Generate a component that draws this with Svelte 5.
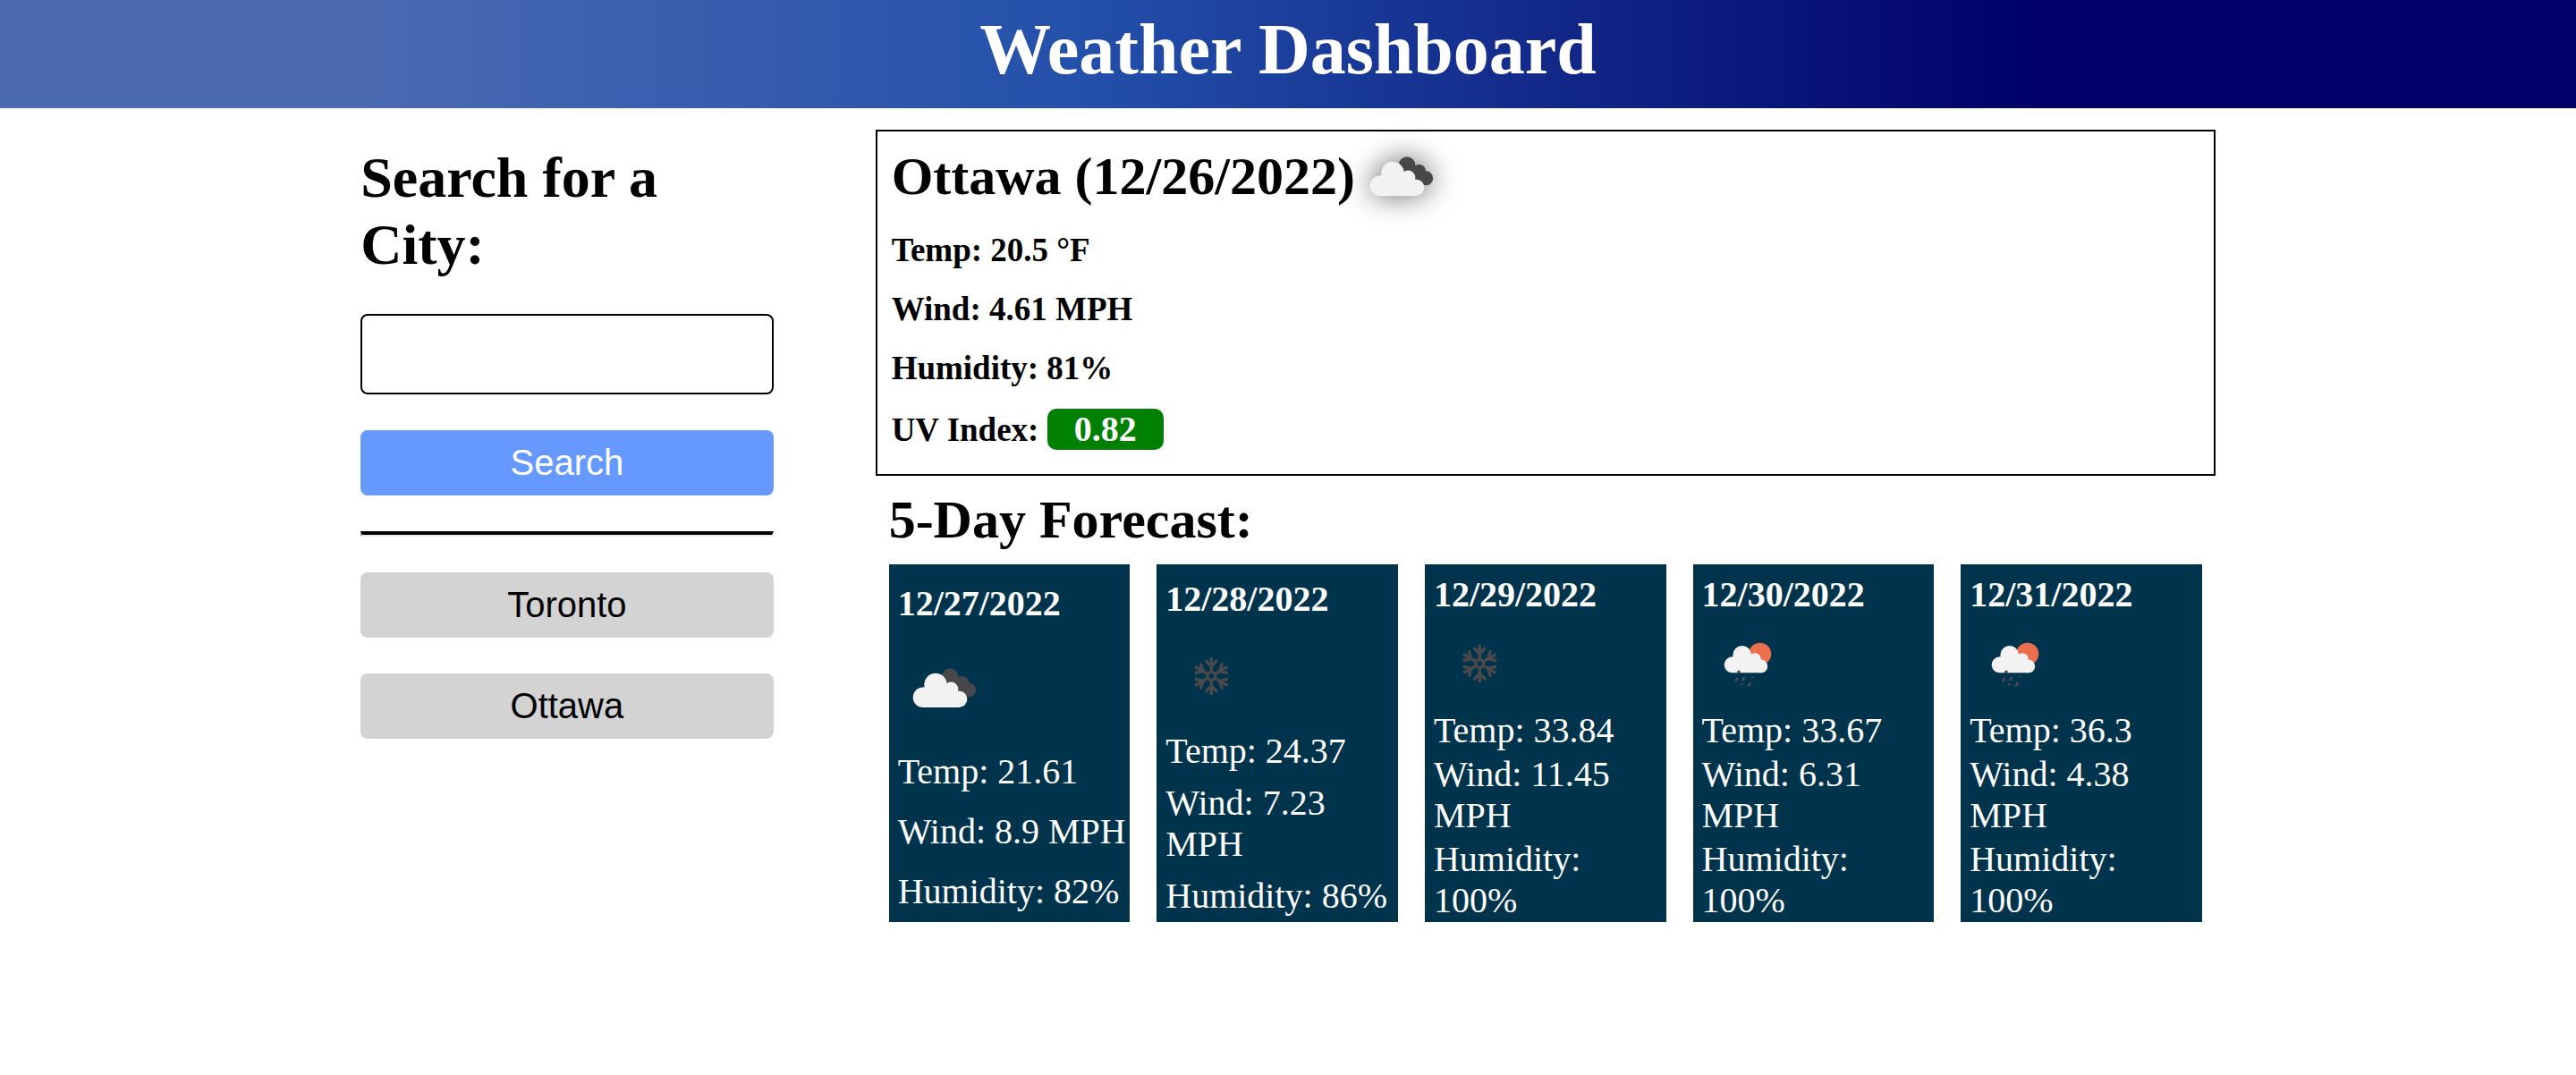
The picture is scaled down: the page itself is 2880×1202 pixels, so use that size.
<script>
  const history = ['Toronto', 'Ottawa'];

  const current = {
    city: 'Ottawa',
    date: '12/26/2022',
    temp: '20.5',
    wind: '4.61',
    humidity: '81',
    uv: '0.82',
  };

  const forecast = [
    { date: '12/27/2022', icon: 'clouds', temp: '21.61', wind: '8.9', humidity: '82' },
    { date: '12/28/2022', icon: 'snow', temp: '24.37', wind: '7.23', humidity: '86' },
    { date: '12/29/2022', icon: 'snow', temp: '33.84', wind: '11.45', humidity: '100' },
    { date: '12/30/2022', icon: 'rain', temp: '33.67', wind: '6.31', humidity: '100' },
    { date: '12/31/2022', icon: 'rain', temp: '36.3', wind: '4.38', humidity: '100' },
  ];

  const arms = [0, 60, 120, 180, 240, 300];

  let query = $state('');
</script>

{#snippet weatherIcon(kind, label)}
  <svg class="icon" viewBox="0 0 100 100" role="img" aria-label={label}>
    {#if kind === 'clouds'}
      <g fill="#48484a">
        <circle cx="58" cy="37.5" r="9.3" />
        <circle cx="72" cy="44" r="7" />
        <circle cx="79.2" cy="52.3" r="8" />
        <path d="M60 29 L67 38 L72 37 L80 52 L76 60 L56 52 Z" />
      </g>
      <g fill="#f2f2f2">
        <circle cx="28" cy="60.7" r="11.3" />
        <circle cx="42" cy="46.5" r="12.7" />
        <circle cx="59.3" cy="51.6" r="8" />
        <circle cx="68" cy="62.7" r="9.3" />
        <path d="M28 50 L42 40 L60 50 L68 60 L68 72 L28 72 Z" />
      </g>
    {:else if kind === 'snow'}
      <g fill="none" stroke="#4a4a4c" stroke-width="3.4">
        <circle cx="51.3" cy="51" r="4.4" />
        {#each arms as angle}
          <path
            d="M51.3 46.5 V30 M44.8 33.2 L51.3 40.2 L57.8 33.2"
            transform="rotate({angle} 51.3 51)"
          />
        {/each}
      </g>
    {:else}
      <circle cx="64.7" cy="40.2" r="12.5" fill="#ec6e4c" />
      <g fill="#f2f2f2">
        <circle cx="33.7" cy="52.3" r="9" />
        <circle cx="44.7" cy="41.3" r="10.3" />
        <circle cx="59" cy="46" r="6.8" />
        <circle cx="65.8" cy="53.9" r="7.4" />
        <path d="M33 44 L45 38 L59 44 L66 50 L66 61.3 L33.7 61.3 Z" />
      </g>
      <g stroke="#55494b" stroke-width="2.6" stroke-linecap="round">
        <path d="M41 60.2 v0.2" stroke="#48484a" stroke-width="3.6" />
        <path d="M38.8 67.8 l-1.2 2.4" />
        <path d="M46.8 66.8 l-1.2 2.2" />
        <path d="M56 65.8 v0.2" stroke-width="2.2" />
        <path d="M44.3 74.2 v0.2" />
        <path d="M53.6 73 l-1.2 2.4" />
      </g>
    {/if}
  </svg>
{/snippet}

<header class="banner">
  <h1>Weather Dashboard</h1>
</header>

<div class="page">
  <aside class="sidebar">
    <form class="search" onsubmit={(event) => event.preventDefault()}>
      <h2><label for="city">Search for a City:</label></h2>
      <input id="city" type="text" autocomplete="off" bind:value={query} />
      <button class="btn primary" type="submit">Search</button>
    </form>
    <hr />
    {#each history as city}
      <button class="btn" type="button">{city}</button>
    {/each}
  </aside>

  <main>
    <section class="current">
      <h2 class="place">
        <span>{current.city} ({current.date})</span>
        {@render weatherIcon('clouds', 'Broken clouds')}
      </h2>
      <div class="readings">
        <p>Temp: {current.temp} °F</p>
        <p>Wind: {current.wind} MPH</p>
        <p>Humidity: {current.humidity}%</p>
        <p>UV Index: <span class="uv">{current.uv}</span></p>
      </div>
    </section>

    <section class="forecast">
      <h2>5-Day Forecast:</h2>
      <div class="days">
        {#each forecast as day}
          <article class="day">
            <h3>{day.date}</h3>
            {@render weatherIcon(day.icon, day.icon)}
            <p>Temp: {day.temp}</p>
            <p>Wind: {day.wind} MPH</p>
            <p>Humidity: {day.humidity}%</p>
          </article>
        {/each}
      </div>
    </section>
  </main>
</div>

<style>
  :global(body) {
    margin: 0;
    background: #fff;
    color: #000;
    font-family: 'Liberation Serif', 'Times New Roman', serif;
  }

  h1,
  h2,
  h3,
  p {
    margin: 0;
  }

  .banner {
    padding: 9px 20px 20px;
    background: linear-gradient(90deg, #4b6ab2 14%, #2350aa 42%, #000068 79%);
    color: #fff;
    text-align: center;
  }

  h1 {
    font-size: 80px;
    line-height: 92px;
  }

  .page {
    display: flex;
    align-items: flex-start;
    justify-content: space-between;
    padding: 0 14%;
  }

  .sidebar,
  .search {
    display: flex;
    flex-direction: column;
    gap: 40px;
  }

  .sidebar {
    box-sizing: border-box;
    width: 22.25%;
    padding: 40px 0;
  }

  .search h2 {
    font-size: 64px;
    line-height: 75px;
  }

  input {
    box-sizing: border-box;
    width: 100%;
    height: 90px;
    padding: 0 16px;
    border: 2px solid #000;
    border-radius: 8px;
    background: #fff;
    font: 40px 'Liberation Sans', Arial, sans-serif;
  }

  .btn {
    width: 100%;
    padding: 13px 12px 14px;
    border: 0;
    border-radius: 8px;
    background: #d3d3d3;
    color: #000;
    font: 40px/46px 'Liberation Sans', Arial, sans-serif;
    cursor: pointer;
  }

  .btn.primary {
    background: #6699ff;
    color: #fff;
  }

  hr {
    box-sizing: border-box;
    width: 100%;
    margin: 0;
    border: 2px inset #eee;
    border-top: 4px solid #000;
  }

  main {
    width: 72.25%;
    padding-top: 24px;
  }

  .current {
    padding: 0 16px 27px;
    border: 2px solid #000;
  }

  .place {
    display: flex;
    align-items: center;
    font-size: 60px;
    line-height: 69px;
  }

  .icon {
    display: block;
    flex: none;
    width: 100px;
    height: 100px;
  }

  .place .icon {
    overflow: visible;
    filter: drop-shadow(0 0 16px rgb(0 0 0 / 60%));
  }

  .readings {
    display: flex;
    flex-direction: column;
    gap: 24px;
    padding-top: 12px;
    font-size: 37px;
    font-weight: bold;
    line-height: 42px;
  }

  .uv {
    display: inline-block;
    min-width: 130px;
    border-radius: 10px;
    background: #008000;
    color: #fff;
    font-size: 40px;
    line-height: 46px;
    text-align: center;
  }

  .forecast {
    padding: 15px;
  }

  .forecast h2 {
    margin-bottom: 15px;
    font-size: 60px;
    line-height: 69px;
  }

  .days {
    display: grid;
    grid-template-columns: repeat(5, 1fr);
    gap: 30px;
  }

  .day {
    box-sizing: border-box;
    display: flex;
    flex-direction: column;
    justify-content: space-around;
    min-width: 0;
    min-height: 400px;
    padding: 10px 0 0 10px;
    background: #00334c;
    color: #fff;
    font-size: 40px;
    line-height: 46px;
  }

  h3 {
    font-size: 40px;
  }
</style>
